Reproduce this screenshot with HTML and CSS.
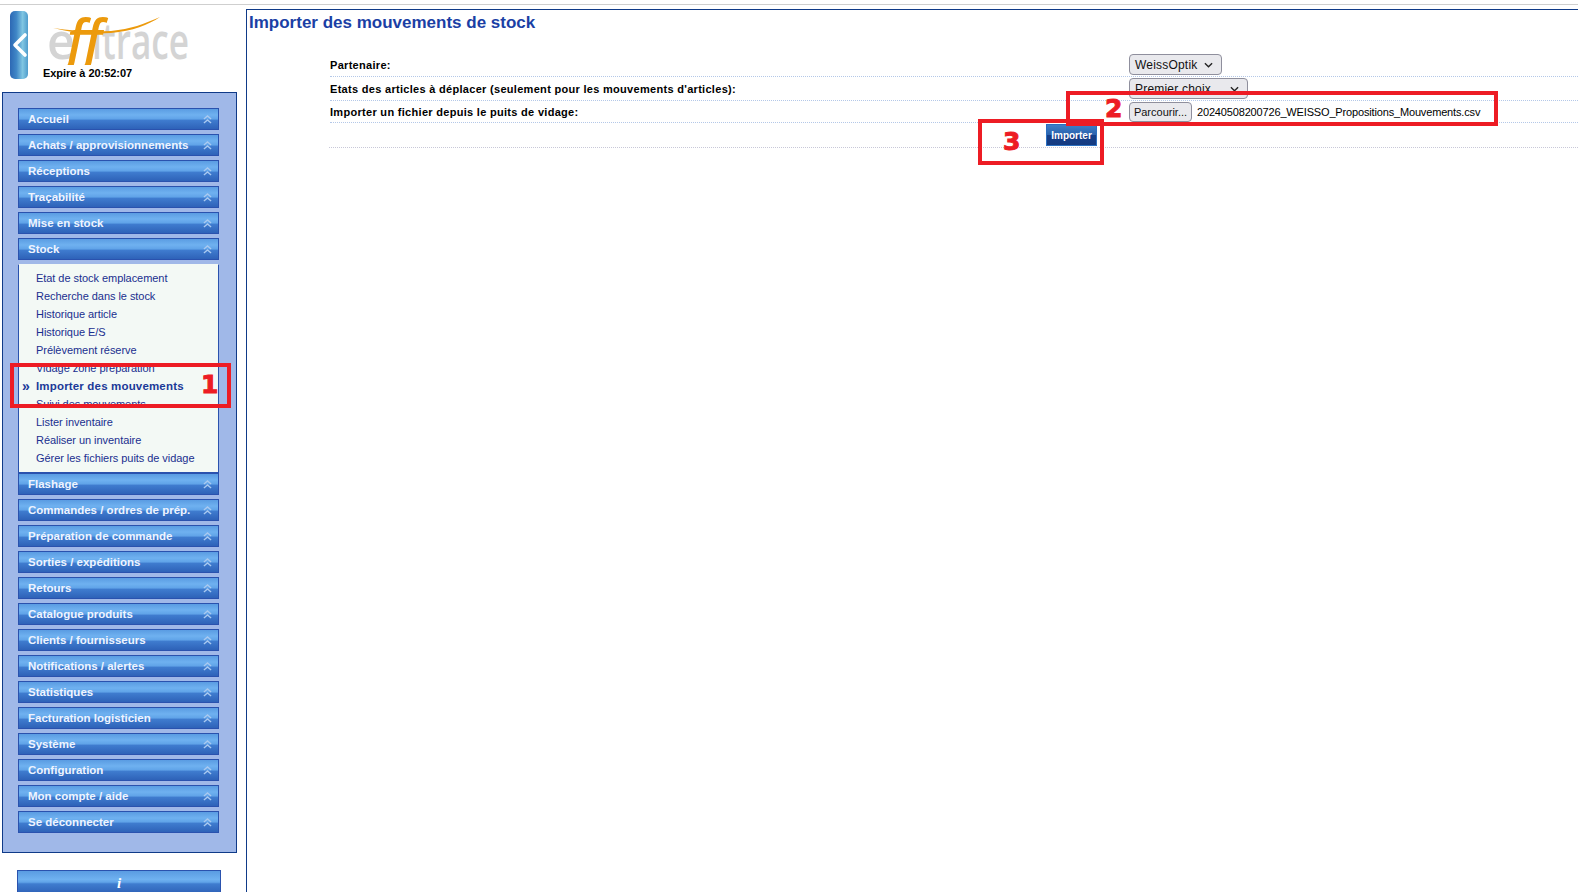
FILE: index.html
```html
<!DOCTYPE html>
<html lang="fr">
<head>
<meta charset="utf-8">
<title>Importer des mouvements de stock</title>
<link rel="stylesheet" href="styles.css">
</head>
<body>
<svg width="0" height="0" class="defs"><defs>
<symbol id="dbl" viewBox="0 0 10 10"><path d="M1 4.500 5 1l4 3.500M1 9 5 5.500 9 9" fill="none" stroke="currentColor" stroke-width="1.5"/></symbol>
</defs></svg>
<div class="page">
<aside class="side">
  <header class="brand">
    <div class="tab">
      <svg width="18" height="68" viewBox="0 0 18 68"><path d="M15 24 5 34 15 44" fill="none" stroke="#fff" stroke-width="3.6" stroke-linecap="round" stroke-linejoin="round"/></svg>
    </div>
    <div class="brand-right">
      <svg class="logo" width="160" height="54" viewBox="0 0 160 54">
        <text x="4" y="48" class="lg" textLength="28" lengthAdjust="spacingAndGlyphs">e</text>
        <text x="49" y="48" class="lg" textLength="97" lengthAdjust="spacingAndGlyphs">itrace</text>
        <text x="24" y="48" class="lo" textLength="35" lengthAdjust="spacingAndGlyphs">ff</text>
        <path d="M10 17C30 22 48 23 68 22 90 20 105 14 117 6 101 13 88 18 68 20 48 21 30 20 10 17Z" fill="#ec9a0c"/>
      </svg>
      <div class="expire">Expire à 20:52:07</div>
    </div>
  </header>
  <nav class="panel">
    <a class="mi">Accueil<svg class="chev"><use href="#dbl"/></svg></a>
    <a class="mi">Achats / approvisionnements<svg class="chev"><use href="#dbl"/></svg></a>
    <a class="mi">Réceptions<svg class="chev"><use href="#dbl"/></svg></a>
    <a class="mi">Traçabilité<svg class="chev"><use href="#dbl"/></svg></a>
    <a class="mi">Mise en stock<svg class="chev"><use href="#dbl"/></svg></a>
    <a class="mi">Stock<svg class="chev"><use href="#dbl"/></svg></a>
    <ul class="sub">
      <li>Etat de stock emplacement</li>
      <li>Recherche dans le stock</li>
      <li>Historique article</li>
      <li>Historique E/S</li>
      <li>Prélèvement réserve</li>
      <li>Vidage zone préparation</li>
      <li class="cur"><span class="mark">»</span>Importer des mouvements</li>
      <li>Suivi des mouvements</li>
      <li>Lister inventaire</li>
      <li>Réaliser un inventaire</li>
      <li>Gérer les fichiers puits de vidage</li>
    </ul>
    <a class="mi">Flashage<svg class="chev"><use href="#dbl"/></svg></a>
    <a class="mi">Commandes / ordres de prép.<svg class="chev"><use href="#dbl"/></svg></a>
    <a class="mi">Préparation de commande<svg class="chev"><use href="#dbl"/></svg></a>
    <a class="mi">Sorties / expéditions<svg class="chev"><use href="#dbl"/></svg></a>
    <a class="mi">Retours<svg class="chev"><use href="#dbl"/></svg></a>
    <a class="mi">Catalogue produits<svg class="chev"><use href="#dbl"/></svg></a>
    <a class="mi">Clients / fournisseurs<svg class="chev"><use href="#dbl"/></svg></a>
    <a class="mi">Notifications / alertes<svg class="chev"><use href="#dbl"/></svg></a>
    <a class="mi">Statistiques<svg class="chev"><use href="#dbl"/></svg></a>
    <a class="mi">Facturation logisticien<svg class="chev"><use href="#dbl"/></svg></a>
    <a class="mi">Système<svg class="chev"><use href="#dbl"/></svg></a>
    <a class="mi">Configuration<svg class="chev"><use href="#dbl"/></svg></a>
    <a class="mi">Mon compte / aide<svg class="chev"><use href="#dbl"/></svg></a>
    <a class="mi">Se déconnecter<svg class="chev"><use href="#dbl"/></svg></a>
  </nav>
  <div class="info">i</div>
</aside>
<main class="main">
  <h1>Importer des mouvements de stock</h1>
  <form class="form">
    <div class="row r1">
      <label>Partenaire:</label>
      <div class="sel s1">WeissOptik<svg width="9" height="6" viewBox="0 0 10 6"><path d="M1 1l4 4 4-4" fill="none" stroke="#222" stroke-width="1.5"/></svg></div>
    </div>
    <div class="row r2">
      <label>Etats des articles à déplacer (seulement pour les mouvements d'articles):</label>
      <div class="sel s2">Premier choix<svg width="9" height="6" viewBox="0 0 10 6"><path d="M1 1l4 4 4-4" fill="none" stroke="#222" stroke-width="1.5"/></svg></div>
    </div>
    <div class="row r3">
      <label>Importer un fichier depuis le puits de vidage:</label>
      <div class="file"><span class="browse">Parcourir...</span><span class="fname">20240508200726_WEISSO_Propositions_Mouvements.csv</span></div>
    </div>
    <div class="row r4">
      <span></span>
      <button type="button" class="go">Importer</button>
    </div>
  </form>
</main>
</div>
<div class="note n1"><span>1</span></div>
<div class="note n2"><span>2</span></div>
<div class="note n3"><span>3</span></div>
</body>
</html>
```
FILE: styles.css
```css
* { box-sizing: border-box; }
html, body { margin: 0; height: 892px; overflow: hidden; background: #fff; }
body { font-family: "Liberation Sans", Arial, sans-serif; border-top: 1px solid transparent; position: relative; }
.defs { position: absolute; }
.page { display: flex; height: 888px; margin-top: 3px; border-top: 1px solid #cfcfcf; }
.side { width: 246px; flex: none; padding-top: 6px; }
.brand { display: flex; height: 81px; padding-left: 10px; }
.tab { width: 18px; height: 68px; border-radius: 5px; background: linear-gradient(90deg, #2d68b4 0, #3f86c6 35%, #80c6e2 70%, #4f9ccc 100%); }
.tab svg { display: block; }
.brand-right { margin-left: 15px; }
.logo { display: block; }
.lg { font: 600 50px "Open Sans", sans-serif; fill: #d4d4d4; }
.lo { font: italic 600 54px "Open Sans", sans-serif; fill: #ec9a0c; }
.expire { font-size: 11px; font-weight: 700; color: #000; line-height: 14px; margin-top: 1px; letter-spacing: -.05px; }
.panel { margin-left: 2px; width: 235px; height: 761px; background: #a0b8e8; border: 1px solid #0f3a88; padding: 15px 17px 0 15px; }
.mi { display: flex; align-items: center; justify-content: space-between; height: 22px; margin-bottom: 4px; padding: 0 6px 0 9px; border: 1px solid #2a52ae; background: linear-gradient(#5a9ce2 0, #6fb1f0 30%, #60a3e8 50%, #3f7ccf 56%, #2e62b8 100%); color: #eef4ff; font-size: 11.500px; font-weight: 700; }
.chev { width: 9px; height: 9px; color: #a9c9f0; }
.sub { list-style: none; margin: 0; padding: 4px 0 6px 17px; height: 209px; background: #f3f9f5; border: 1px solid #2a52ae; border-top-color: #f3f9f5; }
.sub li { position: relative; height: 18px; line-height: 18px; font-size: 11px; color: #1a2f8f; letter-spacing: -.05px; }
.sub .cur { font-weight: 700; font-size: 11.500px; color: #1b3a98; letter-spacing: .17px; }
.mark { position: absolute; left: -14px; font-size: 14px; color: #1b3a98; }
.info { margin: 17px 0 0 17px; width: 204px; height: 30px; border: 1px solid #2a52ae; background: linear-gradient(#5a9ce2 0, #6fb1f0 30%, #60a3e8 40%, #3f7ccf 46%, #2e62b8 80%); color: #fff; font: italic 700 15px/24px "Liberation Serif", serif; text-align: center; }
.main { flex: 1; margin-top: 4px; border-left: 1px solid #0f3a88; border-top: 1px solid #0f3a88; padding-left: 2px; }
h1 { margin: 2px 0 0; font-size: 17px; line-height: 21px; font-weight: 700; color: #1b3fa5; }
.form { margin: 21px 0 0 81px; }
.row { display: grid; grid-template-columns: 799px 1fr; border-bottom: 1px dotted #b4c8e8; font-size: 11px; font-weight: 700; color: #000; }
.row label { letter-spacing: .3px; align-self: center; }
.r1 { height: 23px; }
.r2 { height: 24px; }
.r3 { height: 22px; }
.r4 { height: 25px; margin-left: -1px; grid-template-columns: 800px 1fr; border-bottom-color: #c8c8d8; }
.sel { display: flex; align-items: center; justify-content: space-between; height: 21px; padding: 0 8px 0 5px; border: 1px solid #8f8f9d; border-radius: 4px; background: #e9e9ed; font-size: 12px; font-weight: 400; letter-spacing: .2px; color: #111; }
.s1 { width: 93px; }
.s2 { width: 119px; }
.r2 .sel { margin-top: 1px; }
.file { display: flex; align-items: center; font-weight: 400; }
.browse { width: 63px; height: 20px; line-height: 18px; text-align: center; border: 1px solid #8f8f9d; border-radius: 4px; background: #e9e9ed; font-size: 11px; color: #111; }
.fname { margin-left: 5px; font-size: 11px; letter-spacing: -.16px; color: #000; }
.go { justify-self: start; margin: 1px 0 0 -83px; width: 51px; height: 22px; padding: 0; border: 1px solid #2b6fc0; background: linear-gradient(#3f7fc8 0, #2a63ae 48%, #153f8a 52%, #143a80 100%); color: #fff; font: 700 10px "Liberation Sans", sans-serif; }
.note { position: absolute; border: 4.500px solid #ed1c24; }
.note span { position: absolute; font: 700 25px/26px "DejaVu Sans", sans-serif; color: #ed1c24; -webkit-text-stroke: 1px #ed1c24; }
.n1 { left: 10px; top: 362px; width: 221px; height: 45px; }
.n1 span { left: 187px; top: 5px; }
.n2 { left: 1066px; top: 90px; width: 432px; height: 35px; }
.n2 span { left: 35px; top: 1px; }
.n3 { left: 978px; top: 118px; width: 126px; height: 46px; }
.n3 span { left: 21px; top: 6px; }
```
